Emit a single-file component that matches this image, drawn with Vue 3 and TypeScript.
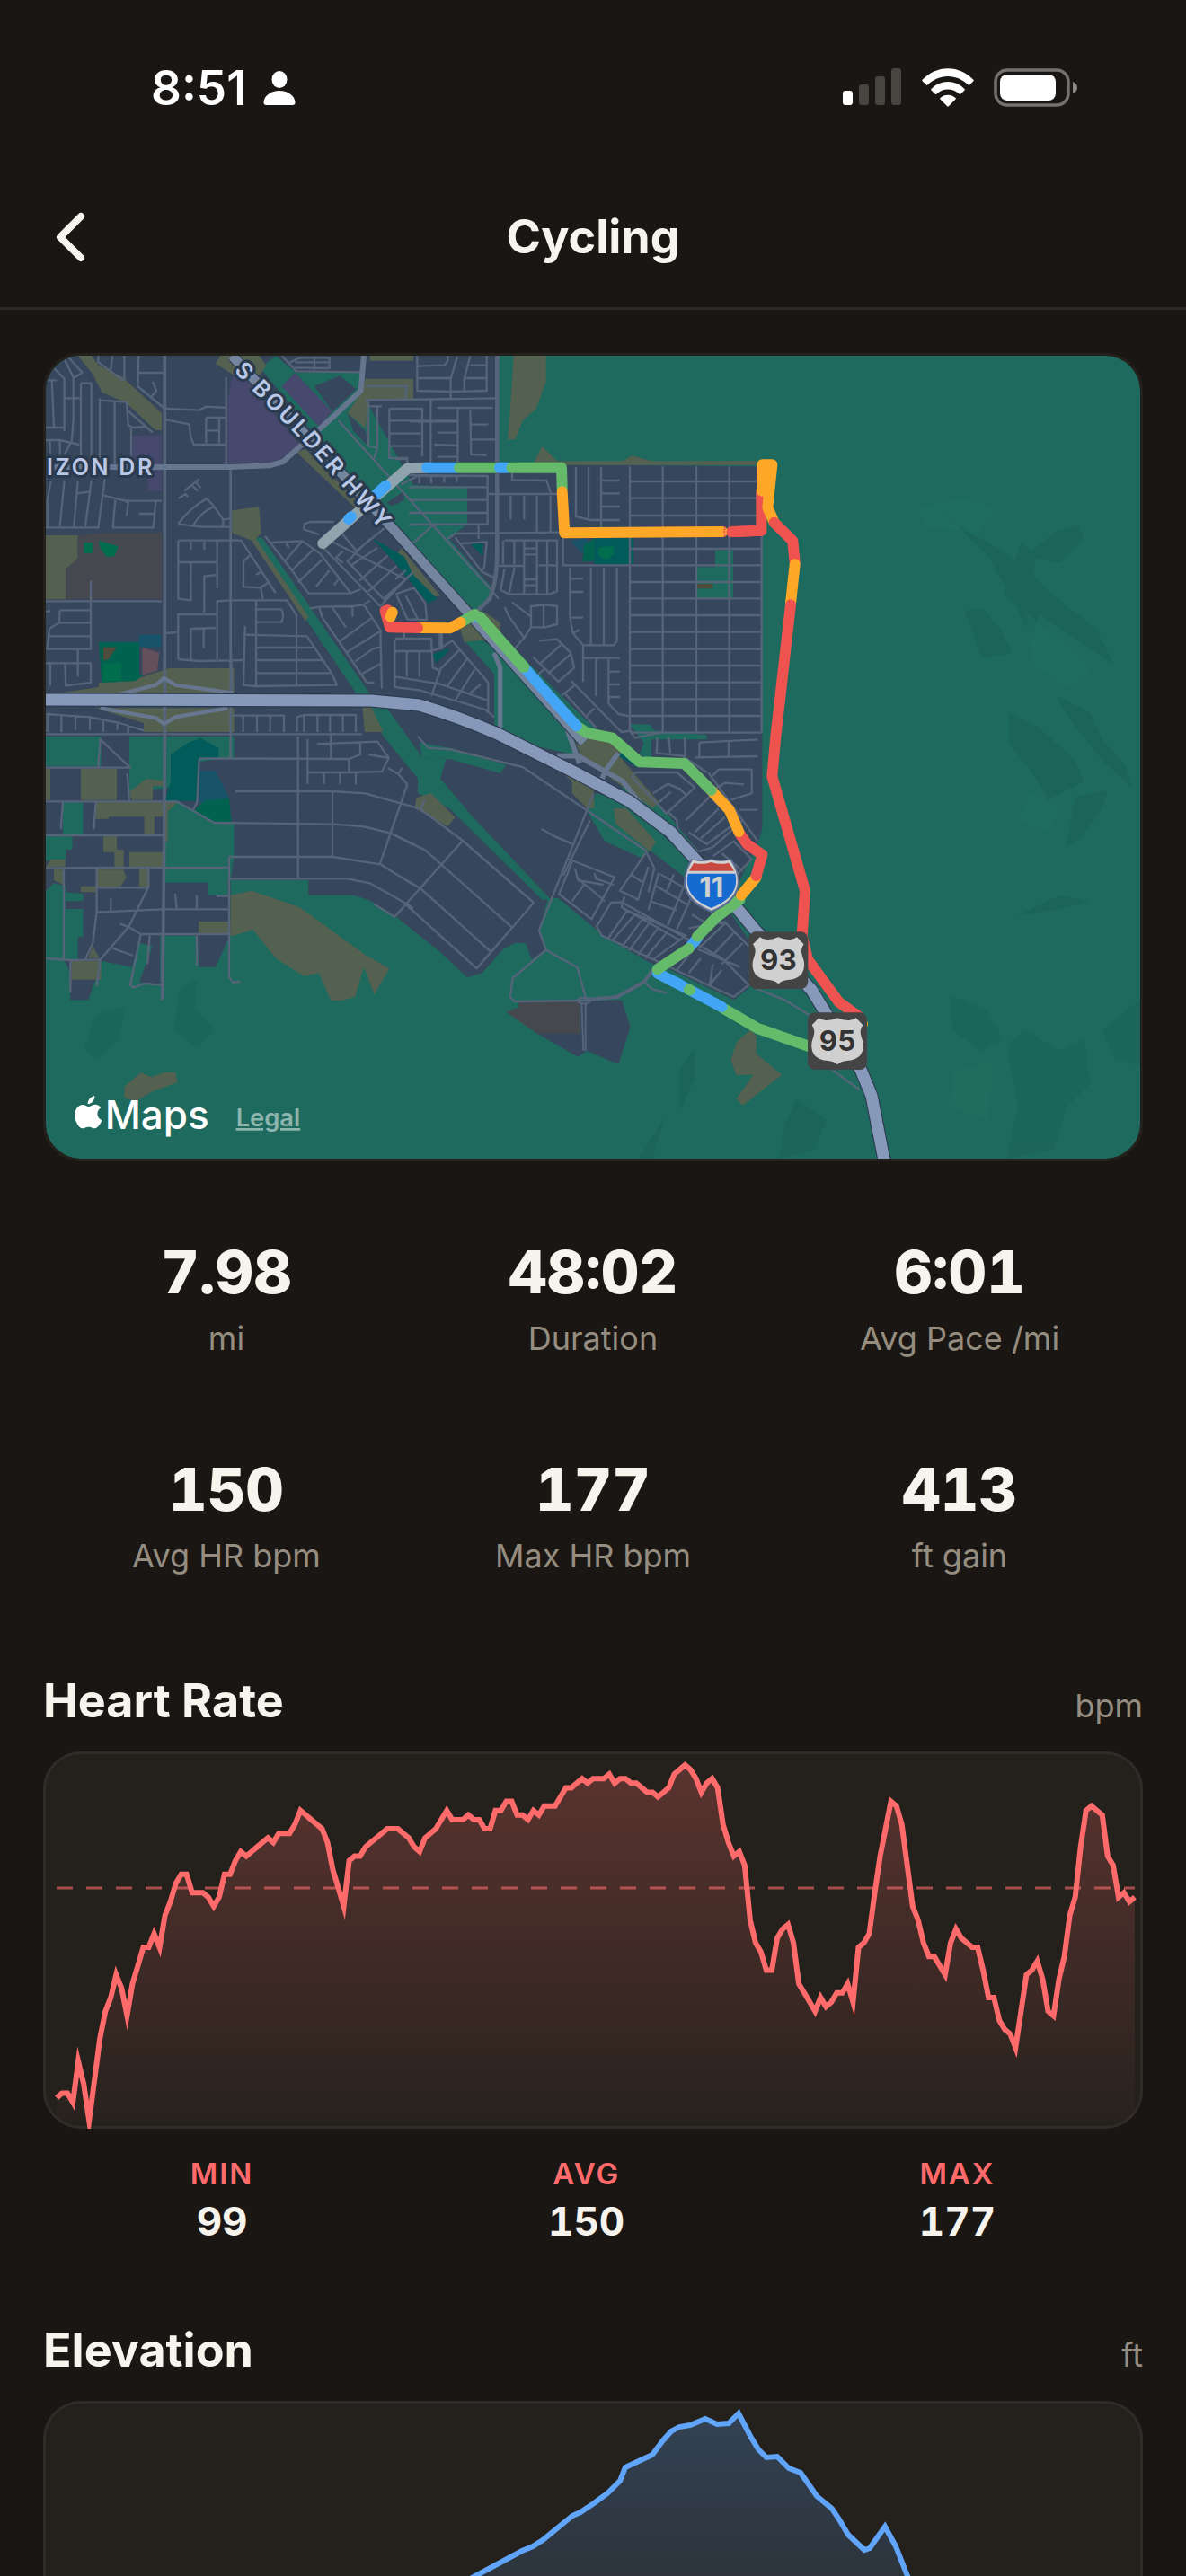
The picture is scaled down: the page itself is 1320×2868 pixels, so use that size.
<script setup lang="ts">
import { computed } from 'vue'

interface Stat {
  value: string
  label: string
}

interface Leg {
  zone: 'idle' | 'easy' | 'steady' | 'tempo' | 'hard'
  d: string
}

const stats: Stat[] = [
  { value: '7.98', label: 'mi' },
  { value: '48:02', label: 'Duration' },
  { value: '6:01', label: 'Avg Pace /mi' },
  { value: '150', label: 'Avg HR bpm' },
  { value: '177', label: 'Max HR bpm' },
  { value: '413', label: 'ft gain' },
]

const heartSummary: Stat[] = [
  { label: 'MIN', value: '99' },
  { label: 'AVG', value: '150' },
  { label: 'MAX', value: '177' },
]

// Heart rate samples, evenly spaced over the ride
const heartRate: number[] = [
  104, 105, 105, 103, 112, 107, 99, 108, 117, 123, 126, 131, 128, 122, 129, 133, 137, 137, 140, 137,
  144, 147, 151, 153, 153, 149, 149, 149, 148, 146, 148, 153, 153, 156, 158, 157, 158, 159, 160, 161,
  160, 162, 162, 162, 164, 167, 166, 165, 164, 163, 160, 154, 150, 146, 156, 157, 157, 159, 160, 161,
  162, 163, 163, 163, 162, 161, 159, 158, 161, 162, 163, 165, 167, 165, 165, 165, 166, 165, 165, 163,
  163, 167, 167, 169, 169, 166, 166, 165, 167, 166, 168, 168, 168, 170, 172, 172, 173, 174, 173, 174,
  174, 174, 175, 173, 174, 174, 173, 173, 172, 171, 171, 170, 171, 172, 175, 176, 177, 176, 174, 171,
  173, 174, 172, 164, 160, 157, 158, 155, 143, 138, 136, 132, 132, 139, 141, 142, 138, 129, 127, 125,
  123, 126, 124, 125, 127, 127, 129, 125, 137, 138, 140, 149, 157, 163, 169, 168, 164, 155, 146, 143,
  138, 135, 135, 133, 131, 138, 141, 139, 138, 137, 137, 132, 126, 126, 121, 119, 118, 115, 123, 131,
  132, 134, 130, 123, 122, 130, 135, 144, 148, 159, 167, 168, 167, 166, 157, 155, 148, 149, 147, 148,
]

// Elevation profile in chart units (x along the ride, y down from the top)
const elevation: [number, number][] = [
  [15, 405], [90, 372], [180, 340], [270, 300], [360, 262], [430, 222], [481, 195], [533, 167], [545, 162], [556, 155],
  [589, 128], [598, 124], [613, 114], [628, 103], [642, 89], [648, 74], [663, 67], [678, 60],
  [690, 44], [699, 34], [708, 29], [720, 27], [737, 20], [750, 26], [763, 25], [774, 14],
  [787, 39], [796, 54], [805, 63], [817, 62], [830, 75], [843, 80], [850, 90], [861, 106],
  [878, 120], [886, 132], [896, 149], [914, 166], [920, 164], [937, 140], [949, 162], [962, 195],
  [1010, 280], [1080, 350], [1215, 400],
]

const PLOT_LEFT = 15
const PLOT_WIDTH = 1200
const PLOT_TOP = 15
const PLOT_HEIGHT = 396
const BASE = PLOT_TOP + PLOT_HEIGHT

const heartY = (bpm: number): number => PLOT_TOP + ((177 - bpm) / (177 - 99)) * PLOT_HEIGHT

const heartLine = computed(() =>
  heartRate
    .map((v, i) => {
      const x = PLOT_LEFT + (i / (heartRate.length - 1)) * PLOT_WIDTH
      return `${x.toFixed(1)},${heartY(v).toFixed(1)}`
    })
    .join(' '),
)
const elevationLine = computed(() => elevation.map(([x, y]) => `${x},${y}`).join(' '))
const areaUnder = (line: string): string =>
  `${PLOT_LEFT},${BASE} ${line} ${PLOT_LEFT + PLOT_WIDTH},${BASE}`

const route: Leg[] = [
  { zone: 'tempo', d: 'M2740 2262L2760 2280' },
  { zone: 'idle', d: 'M958 675L1240 425Q1260 422 1300 422' },
  { zone: 'easy', d: 'M1044 594L1052 586M1138 510L1168 482' },
  { zone: 'easy', d: 'M1305 422L1405 422' },
  { zone: 'steady', d: 'M1413 422L1530 422' },
  { zone: 'easy', d: 'M1548 422L1575 422' },
  { zone: 'steady', d: 'M1588 422L1755 422L1757 490' },
  { zone: 'hard', d: 'M2325 636L2422 632L2422 500' },
  { zone: 'tempo', d: 'M1757 502L1765 640L2292 636' },
  { zone: 'hard', d: 'M2328 636L2422 632' },
  { zone: 'tempo', d: 'M2424 500L2425 412L2458 412L2443 555L2465 605M2440 420L2436 500' },
  { zone: 'hard', d: 'M2465 605L2527 667L2534 740' },
  { zone: 'tempo', d: 'M2534 745L2520 875' },
  { zone: 'hard', d: 'M2520 880L2470 1320L2458 1453L2568 1835L2558 1985L2577 2065L2680 2206L2750 2258' },
  { zone: 'steady', d: 'M2590 2358L2410 2295L2290 2225' },
  { zone: 'easy', d: 'M2290 2223L2075 2110' },
  { zone: 'steady', d: 'M2180 2165L2184 2167' },
  { zone: 'easy', d: 'M2150 2148L2120 2133' },
  { zone: 'easy', d: 'M2188 2018L2208 1994' },
  { zone: 'steady', d: 'M2075 2098L2180 2028M2208 1988L2270 1925L2350 1865' },
  { zone: 'tempo', d: 'M2355 1850L2405 1790' },
  { zone: 'hard', d: 'M2405 1785L2425 1715L2375 1680L2350 1645' },
  { zone: 'tempo', d: 'M2347 1638L2315 1565L2255 1500' },
  { zone: 'steady', d: 'M2255 1500L2165 1410L2015 1405L1925 1325L1840 1308L1805 1285' },
  { zone: 'easy', d: 'M1805 1285L1630 1090' },
  { zone: 'steady', d: 'M1626 1088L1490 930' },
  { zone: 'easy', d: 'M1474 920L1476 922' },
  { zone: 'steady', d: 'M1630 1088L1482 920M1465 912L1425 935' },
  { zone: 'tempo', d: 'M1418 939L1383 958L1285 957' },
  { zone: 'hard', d: 'M1275 957L1182 955L1166 900L1174 897' },
  { zone: 'tempo', d: 'M1184 920L1190 905' },
]

// Residential blocks east of the highway share one regular grid
const gridStreets = computed(() => {
  const cols = [1983, 2093, 2205, 2315, 2423].map((x) => `M${x} 418V1305`)
  const rows = [468, 524, 582, 638, 693, 748, 804, 859, 915, 971, 1028, 1083, 1139, 1195, 1251, 1307].map(
    (y) => `M1983 ${y}H2423`,
  )
  return cols.concat(rows).join('')
})

const shieldPath =
  'M37 18Q50 28 65 26Q82 26 99 18Q116 26 133 26Q148 28 161 18L184 42Q172 58 178 78Q194 118 176 142Q160 160 130 161Q112 162 99 174Q86 162 68 161Q38 160 22 142Q4 118 20 78Q26 58 14 42Z'
</script>

<template>
  <div class="app">
    <div class="status-bar">
      <div class="clock">
        <span>8:51</span>
        <svg class="person" viewBox="0 0 36 38" aria-hidden="true">
          <ellipse cx="18" cy="9.500" rx="8.500" ry="9.500" />
          <path d="M3.500 38C1 38 .3 36.500.5 34.500C1.200 27.500 8.500 22 18 22s16.800 5.500 17.500 12.500C35.700 36.500 35 38 32.500 38Z" />
        </svg>
      </div>
      <div class="indicators">
        <svg class="cellular" viewBox="0 0 66 42" aria-hidden="true">
          <rect x="0" y="25" width="11" height="16" rx="3" fill="#fff" />
          <rect x="18" y="18" width="11" height="23" rx="3" fill="#474540" />
          <rect x="36" y="9" width="11" height="32" rx="3" fill="#474540" />
          <rect x="54" y="0" width="11" height="41" rx="3" fill="#474540" />
        </svg>
        <svg class="wifi" viewBox="0 0 58 43" aria-hidden="true">
          <path d="M.6 12.800C8.500 4.800 18 .2 29 .2s20.500 4.600 28.400 12.600c.5.500.5 1 0 1.500l-4.200 4.300c-.5.500-1 .5-1.500 0C45.500 12.500 37.500 9 29 9S12.500 12.500 6.300 18.600c-.5.500-1 .5-1.500 0L.6 14.300c-.5-.5-.5-1 0-1.500Z" />
          <path d="M10.500 23C15.500 17.800 22 15 29 15s13.500 2.800 18.500 8c.5.500.5 1 0 1.500l-4.300 4.200c-.5.500-1 .5-1.500 0C38.200 25.400 33.800 23.600 29 23.600s-9.200 1.800-12.700 5.100c-.5.500-1 .5-1.500 0l-4.300-4.200c-.5-.5-.5-1 0-1.500Z" />
          <path d="M20.500 33.100C22.800 30.900 25.800 29.700 29 29.700s6.200 1.200 8.500 3.400c.5.500.5 1 0 1.500L29.800 42.300c-.6.600-1 .6-1.600 0L20.500 34.600c-.5-.5-.5-1 0-1.500Z" />
        </svg>
        <svg class="battery" viewBox="0 0 94 43" aria-hidden="true">
          <rect x="2" y="2" width="81" height="39" rx="13" fill="none" stroke="#73716e" stroke-width="3.500" />
          <rect x="7" y="7" width="62" height="29" rx="8" fill="#fff" />
          <path d="M88 15c3 1 5 3.500 5 6.500s-2 5.500-5 6.500Z" fill="#8a8886" />
        </svg>
      </div>
    </div>

    <header class="nav">
      <button class="back" type="button" aria-label="Back">
        <svg viewBox="0 0 36 56" aria-hidden="true">
          <path d="M30 5L7 28L30 51" />
        </svg>
      </button>
      <h1>Cycling</h1>
    </header>

    <main class="content">
      <section class="map-card" aria-label="Route map">
        <svg class="map" viewBox="33 48 3654 2682" role="img" aria-label="Cycling route near Boulder Highway">
          <rect x="33" y="48" width="3654" height="2682" fill="#1e6a5e" />

          <!-- hillshade -->
          <g fill="#1b6056" opacity="0.500">
            <path d="M3000 540L3120 640L3230 700L3330 780L3400 860L3350 900L3330 1000L3270 880L3180 720Z" />
            <path d="M3230 850L3290 670L3340 720L3330 790L3460 900L3540 960L3600 1080L3540 1040L3420 960L3330 900Z" />
            <path d="M3300 720L3400 640L3480 610L3500 660L3420 740Z" />
            <path d="M3100 900L3160 890L3220 960L3260 1040L3160 1060Z" />
            <path d="M3250 1240L3350 1290L3470 1400L3500 1470L3380 1530L3330 1450L3250 1340Z" />
            <path d="M3400 1180L3520 1240L3560 1330L3640 1420L3660 1490L3560 1400L3480 1300Z" />
            <path d="M3470 1520L3580 1500L3560 1560L3490 1660L3440 1690Z" />
            <path d="M3270 1920L3420 1850L3520 1870L3400 1900Z" />
            <path d="M3050 2180L3180 2240L3230 2330L3150 2370L3060 2300Z" />
            <path d="M3240 2350L3300 2300L3420 2370L3500 2330L3520 2480L3440 2560L3400 2700L3240 2730L3280 2560Z" />
            <path d="M3560 2300L3687 2200L3687 2420L3600 2400Z" />
            <path d="M2150 2430L2200 2360L2200 2460L2150 2570Z" />
            <path d="M2100 2590L2060 2730L2010 2730L2070 2640Z" />
            <path d="M480 2160L540 2130L530 2230L600 2300L540 2360L460 2300Z" />
            <path d="M200 2250L300 2220L280 2330L200 2400L160 2360Z" />
            <path d="M2540 2530L2640 2600L2600 2700L2480 2730L2500 2620Z" />
          </g>
          <g fill="#216f62" opacity="0.500">
            <path d="M2940 560L3100 520L3200 560L3140 640L2980 620Z" />
            <path d="M3300 900L3420 1000L3520 1100L3450 1160L3330 1080Z" />
            <path d="M3060 2440L3200 2400L3180 2600L3050 2560Z" />
            <path d="M3320 1500L3420 1560L3380 1640L3280 1600Z" />
          </g>

          <!-- built-up land -->
          <g fill="#36465c">
            <path d="M33 48H1545V410L2425 418V1630L2412 1670L2350 1800L2280 1800L2380 1990V2160L2330 2200L2290 2180L2120 2100L2050 2075L1900 1990L1745 1860H1710L1680 1970L1700 2035L1655 2065L1635 2010H1600L1560 2030L1490 2110L1440 2125L1350 2040L1200 1920L1110 1865L1060 1850H910V1800H650V1980L600 2090H545L540 1985H415V2150L345 2140L390 2020L345 2010L320 2090L220 2070L175 2200H115V2110L70 2020L33 1840Z" />
            <path d="M1675 2313H1817V2205L1955 2200L1985 2290L1945 2415L1840 2370L1810 2390Z" />
          </g>

          <!-- open ground -->
          <g fill="#1e6a5e">
            <path d="M800 48L870 105H1085L1075 150L1260 480L1440 486V610L1380 660L1520 820L1510 860L1465 900L1200 640L750 90Z" />
            <path d="M720 660L755 655L1120 1185H1075L910 940Z" />
            <path d="M1110 1222H1170L1290 1390L1370 1395L1350 1460L1460 1590L1720 1865H1690L1380 1560L1275 1510V1460L1160 1320Z" />
            <path d="M1280 1340L1390 1360L1570 1415L1550 1442L1380 1395L1290 1390Z" />
            <path d="M1430 1000L1470 980L1560 1050L1780 1290L1815 1385L1660 1350L1530 1290V1110Z" />
            <path d="M1600 1030L1760 1190L1880 1305L1860 1320L1640 1110Z" />
            <path d="M1980 1278L2050 1280L2065 1300L2240 1315V1330L2055 1330V1400L2015 1380L2030 1340Z" />
            <path d="M1840 1570L1900 1670L2020 1725L2050 1700L2180 1800L2250 1800L1980 1540L1870 1510Z" />
            <path d="M1930 1400L2060 1520L2210 1700L2190 1720L1960 1500Z" />
            <path d="M2300 1880L2380 2000V1970L2330 1860Z" />
            <path d="M2268 698H2328V857H2208V754H2268Z" />
            <path d="M33 1320H218V1420H33ZM312 1320H450V1490L312 1505ZM430 1320H662V1392H640L430 1420Z" />
            <path d="M430 1535H470L595 1610H662V1720L650 1800H640V1850H576V1808H428V1640Z" />
            <path d="M90 1540H158V1646H90ZM33 1650H122V1698H100V1735H33ZM33 1835L60 1810L100 1820V1840L158 1846V1870H100V1896H158V1990H140V2066H90L33 2060Z" />
          </g>

          <g fill="#546150">
            <path d="M140 48H185L210 80L290 120L420 240V297H400L300 205L220 170L190 110Z" />
            <path d="M615 48H745L770 80L750 110L680 125L600 75Z" />
            <path d="M870 370L900 360L1100 560L1080 570Z" />
            <path d="M1115 48H1260V65H1115ZM1100 125H1260V195H1110L1100 290L1040 240L1080 180Z" />
            <path d="M655 565L745 553L752 640L735 660L910 920L900 935L720 665L655 640Z" />
            <path d="M33 648H140V725L100 760V862H33Z" />
            <path d="M445 1092H662V1175H73L210 1155V1140L360 1120Z" />
            <path d="M200 1225H662V1305H360V1275ZM1090 1222H1120L1160 1305H1098Z" />
            <path d="M1595 48H1703V135L1670 225L1625 265L1600 328H1575L1585 205Z" />
            <path d="M1665 400L1690 350L1740 400H1960L1990 382L2055 400H2405V413H1665Z" />
            <path d="M1410 940L1500 905L1550 940V970L1540 990L1430 1005Z" />
            <path d="M1220 690L1350 850L1310 855L1200 720Z" />
            <path d="M1795 1320L1940 1340L1960 1400L2080 1540L2060 1560L1880 1430L1820 1390Z" />
            <path d="M1650 1345L1860 1480L1865 1560L1840 1560L1790 1510V1470Z" />
            <path d="M1930 1560H1970L2070 1670L2050 1705L1935 1610Z" />
            <path d="M1270 1525L1320 1510L1400 1590L1375 1620L1265 1560Z" />
            <path d="M150 1428H270V1532H150ZM33 1428H48V1532H33ZM312 1505L370 1460L425 1468V1485H390V1532H320Z" />
            <path d="M200 1538H475L440 1570V1672H430V1588H395V1645H362V1588H243V1595H200ZM225 1652H270V1698H293V1755H262V1706H225ZM312 1706H430V1755H312ZM48 1730H98V1755H33L48 1735Z" />
            <path d="M200 1765H292L302 1790L280 1825H200V1840H150V1820H200ZM345 1762H380V1822H345ZM60 1765H90V1815L60 1800Z" />
            <path d="M543 1938H650V1978H543ZM118 2070H218V2132H118ZM175 2060L190 2020L212 2060Z" />
            <path d="M650 1850L720 1835L880 1890L1100 2050L1180 2095L1130 2182L1095 2090L1065 2190L1020 2202H985L945 2110L895 2120L800 2060L725 1965L650 1988Z" />
            <path d="M295 2490L350 2442L385 2458L430 2442H465L473 2475L390 2505L330 2540L295 2525Z" />
            <path d="M2385 2300L2405 2320V2380L2490 2450L2360 2552L2338 2530L2395 2450H2338L2320 2400L2340 2340Z" />
          </g>

          <!-- campuses, parks and commercial land -->
          <path d="M655 120L700 125L880 345L800 405H640V200ZM322 315H420V500H375V460L322 400ZM820 150L865 105L990 235L945 285Z" fill="#46486e" />
          <path d="M930 150L1015 115L1070 160L990 235ZM1040 240L1100 300L1110 350L1060 300ZM1170 540L1230 500V530L1190 550Z" fill="#36465c" />
          <path d="M140 648L220 640H420V862H100V760L140 725Z" fill="#45484f" />
          <path d="M1570 2240L1610 2225V2205H1817V2313H1675Z" fill="#45484f" />
          <path d="M450 1380L510 1340L550 1325L610 1360V1390L545 1395L535 1535H430L450 1470ZM1120 655L1230 720L1260 780L1340 860L1310 875L1200 740ZM1450 675H1492V718ZM1325 1045L1380 1025L1370 1045L1335 1075ZM1945 1385L1960 1370L2010 1410V1425ZM1865 658H1995V744H1865Z" fill="#005b5a" />
          <path d="M545 1435H600L645 1525L545 1540ZM345 980H418V1022H345ZM1785 665L1840 658V700L1820 705Z" fill="#17546a" />
          <path d="M210 1005H345V1115H360L330 1135L220 1140ZM525 1570L560 1535L645 1525L653 1605H595ZM1830 680L1865 658V735H1825Z" fill="#00624f" />
          <path d="M160 672H190V707H160ZM210 665L275 685L262 718L235 720L215 690ZM225 1075H285V1135H225ZM1880 690L1930 682V710L1905 730L1878 715Z" fill="#006e4c" />
          <path d="M225 1022H270L240 1064H225ZM2208 810H2260V826H2208Z" fill="#504c3c" />
          <path d="M355 1022L412 1040L405 1100L355 1115Z" fill="#63505a" />

          <!-- residential streets -->
          <g class="streets">
            <path :d="gridStreets" />
            <path d="M60 90L95 125V300M95 60L125 120V260L120 330L95 380M110 55L155 105L125 122M33 130H70M53 130L60 285M33 288H95M95 190H150M150 140H185V410M150 140V410M33 330H80L145 345M47 330V410M80 330V410M213 190V410M213 197L303 203L308 280L325 288L370 285M305 230L390 305M263 200V410M318 290V410" />
            <path d="M208 48V70L292 130M255 48L250 95M295 48V130M343 48L340 150L430 225M343 105H425M390 135L402 165L385 185M435 225L545 230L570 218L635 222M435 262L512 277L517 320L527 345H635M568 255H635M568 255V340M568 298H612M612 255V340M635 120V410" />
            <path d="M50 465L38 530V620M33 622H208L230 460M95 465L80 618M140 465L127 618M185 465L165 618M137 508L180 502M225 515L300 533H420M300 533L308 540L303 583M265 530L257 622H392L400 535M345 576H397" />
            <path d="M475 525L500 510L507 520M495 500L545 460M520 480L540 500M530 465L550 490M475 610Q510 560 570 525Q600 555 625 595L650 592M475 610L550 620H650M525 615Q550 570 595 552M625 595V618" />
            <path d="M475 665H685L800 840M475 665V860L517 865V738M475 738H605M605 665V825M517 670V695M562 670V695M562 905V785L605 780M715 715L693 735V820L750 823L758 860M750 823L780 803M735 780L755 768M475 1062V912H605V1062M475 1062L545 1068L690 1065M605 1062V868L650 865H838L870 915V1148M517 1062V960L600 957M560 957V1025M650 1000L655 1160M735 868V1150M735 895H820Q830 915 820 938H735M698 950L693 1148L735 1152L1005 1148L985 1105L905 985L693 980M735 1023H925M735 1065H960M735 1108H985" />
            <path d="M33 868H420M183 800V1028H33M33 902H48M80 898H183M80 898L77 940H183M77 940L45 960L38 1025M38 985H180M33 1075H183V1140L100 1150L97 1075M48 1075V1150M140 1030V1120M430 975L470 972" />
            <path d="M765 650L855 765L910 842H1050L1085 828M785 672L890 667L950 710L1050 840M830 735L890 667M855 765L930 692M875 805L955 730M935 820L980 765M995 815L1010 795M835 675L845 690M895 610L915 603H995M895 610V628L945 645M960 690L1150 885L1215 815M1020 640L1070 700L1175 615M990 670L1235 795M1115 660L1040 735L1160 860M1140 690L1050 750M1175 715L1080 800M1205 750L1110 835M1235 795L1160 860M1005 720L1025 700M1160 870L1260 770M1010 265L1520 830L1545 860" />
            <path d="M915 892L945 887L1055 885L1095 880L1115 865M945 887L955 920L1105 1140H1130M990 890L1035 955M1057 885V920M1095 880L1150 965L1155 1160M1120 925L1010 1005M1155 965L1035 1040M1155 1020L1125 1027L1065 1070M1155 1075L1090 1110M1000 720L1025 740" />
            <path d="M33 1245L180 1255L280 1275L360 1300M38 1245V1305M85 1250V1305M132 1250V1298M180 1255V1298M225 1260V1305M272 1270V1298M308 1280V1310M650 1250V1305M650 1250H828V1305M692 1250V1305M738 1250V1305M782 1250V1305M872 1305V1255L895 1248H1068V1305M895 1250V1305M940 1250V1305M982 1250V1305M1025 1250V1305M33 1312H1090M907 1328V1478M985 1312V1395M938 1345L1140 1337L1178 1392L1155 1437L1045 1440H905M1083 1340V1380L1045 1395V1440M1110 1380L1178 1392M962 1440V1478M1015 1440V1478M1068 1440V1480" />
            <path d="M820 48L870 100L1090 103M840 75L880 55H980V90L865 88M930 50V95M865 70H980M1100 150H1240L1232 195H1100M1110 200V350L1140 355L1130 390M1140 215V350M1110 217H1155M1180 225H1290V385M1180 225V390H1240V410M1180 265H1405M1180 308H1285M1180 350H1285M1200 393H1240" />
            <path d="M1273 48V165L1385 168L1505 165V48M1273 83L1365 80L1375 65V48M1273 123H1385M1385 190V125L1407 50M1430 165V125L1450 50M1430 123H1505M1450 80H1505M1100 197L1540 190M1318 197V405M1250 268L1405 267M1408 225V405M1340 222H1525M1340 305H1405M1330 345L1405 348M1340 386H1405M1450 227L1453 378L1505 380M1453 278H1510M1453 328H1535" />
            <path d="M1218 478L1275 450H1405V470M1280 450V475M1320 450V475M1363 450V472M1245 447L1508 450V610L1245 612M1245 487H1508M1245 530H1508M1245 573H1508M1510 510H1740M1590 440V463L1705 465L1720 510M1585 515V595M1630 515V595M1673 515V635M1718 515V635M1803 420V585L1850 597H1950M1845 420V590M1887 420V630M1887 465H1950M1887 508H1950M1887 552H1950M1375 660L1400 642L1755 638M1478 615V660M1258 675L1325 615M1400 655L1490 770L1530 790M1420 675L1505 670L1497 755L1485 770" />
            <path d="M1565 665H1740V835L1715 845H1580L1552 830L1565 760M1597 665V745M1630 665V845M1673 665V845M1707 665V845M1630 692H1673M1630 712H1673M1630 795H1673M1630 815H1673M1540 750H1630M1678 748H1740M1598 755L1580 840M1560 665V745M1760 655V748H1983M1783 755V920L1793 975L1827 1015H1930L1940 1000V755M1783 793H1827M1783 837H1827M1783 923H1827M1793 975L1815 963M1853 755V1012M1896 755V1012M1827 1015V1138M1827 1058H1950M1870 1060V1185M1912 1062V1210L1945 1245L1983 1252V1300L2000 1325L2093 1305M1912 1103H1950M1912 1146H1950M1912 1188H1950" />
            <path d="M1565 888L1580 920L1630 990L1653 955V885L1700 880L1740 885V945L1700 955H1653M1695 882V953M1590 872L1653 920M1630 990L1600 1025M1680 1000L1740 995L1785 1040L1797 1090L1745 1137L1660 1055M1757 1010L1685 1075M1785 1045L1710 1110M1675 1115L1697 1095M1788 1135L1955 1305L1990 1300M1755 1183L1797 1150M1765 1175L1870 1290M1840 1250L1865 1225" />
            <path d="M1200 795L1235 765M1200 845L1262 823L1300 875L1305 930L1240 928L1205 850M1235 850L1275 928M1200 993H1320L1325 1090L1350 1100L1320 1185M1230 970V990M1195 1035H1320M1238 1035V1120M1280 1035V1120M1198 1120L1350 1145L1510 1200M1198 995V1155L1280 1165L1400 1200L1500 1230L1530 1255M1325 1033L1350 1025L1390 1000L1510 1140V1240M1415 1030L1350 1095M1440 1060L1375 1150M1465 1095L1400 1200M1485 1145L1450 1175" />
            <path d="M33 1424H315L215 1330L208 1420M33 1537H470L595 1608L990 1613L1090 1620L1185 1643L1260 1682M305 1443L312 1535M90 1540L83 1630M200 1540L193 1630M33 1650H428M33 1760L200 1758H645M93 1762V2065M203 1758V1905L190 2010L165 2065M33 2061L115 2067L215 2065L310 1955L375 1825V1760M203 1825H375M203 1907L420 1897H645M250 1860V1905M465 1845L470 1895M537 1850V1895M603 1853H645M280 1945L312 1957L350 1980H645M255 2027L325 2052M350 1980L315 2150L325 2158L365 2145L420 2150M380 1985L372 2080M115 2070V2175M215 2065L203 2155M537 1985V2085M645 1720V2125L658 2142L682 2137" />
            <path d="M545 1395L538 1540L525 1565M545 1393L1045 1395M665 1503H990L1100 1510L1260 1555M645 1722H990L1150 1747L1260 1815M645 1795H1040L1115 1810L1240 1880L1260 1895M875 1320V1795M990 1503V1722M1240 1480L1148 1747M1175 1425L1210 1445L1240 1480M1210 1445L1222 1425M1130 1880L1198 1922L1425 1668L1662 1875L1472 2095L1236 1882M1260 1555L1285 1563L1425 1668M1200 1650L1300 1700L1590 1958M1200 1778L1285 1828L1518 2038M1285 1562L1298 1532" />
            <path d="M1275 1320L1310 1358L1385 1363L1625 1422L1840 1567L2035 1700L2065 1760L2045 1840M1862 1510L1680 1967L1703 2033L1592 2127L1583 2190L1598 2205L1830 2202M1703 2033L1808 2092L1835 2190M1687 1628L1735 1655L1790 1678M1775 1728L1932 1790L1855 1930L1745 1845M1760 1785L1850 1600M1800 1760L1810 1800L1895 1815M1790 1740L1745 1850M1865 1775L1870 1795L1930 1815M1805 1790L1900 1870M1830 1815L1790 1870" />
            <path d="M2035 1710L1950 1835L2010 1865L2045 1755M1985 1780L2030 1810M1920 1875L1955 1873L2290 2060L2380 2150L2330 2190L1890 1985L1872 1955ZM1960 1895L2170 1985L2060 2065M1975 1900L1910 1995M2000 1915L1925 2000M2025 1930L1955 2025M2050 1940L1980 2035M2080 1955L2010 2050M2110 1970L2035 2060M1965 1855L1955 1890L2150 2000M2080 1775L2045 1900M2085 1780L2200 1845M2065 1815L2180 1885M2050 1870L2140 1900M2130 1780L2105 1840M2170 1805L2110 1950M2200 1830L2140 1965M2190 1915L2250 1950M2180 1960L2300 1940L2380 2020M2300 1945L2210 2030M2330 1975L2260 2050M2360 2010L2290 2080M2210 2030L2350 2090M2180 2050L2140 2100M2220 2060L2180 2110M2260 2080L2250 2150M2290 2100L2250 2150M2030 2140L2060 2165L2110 2177" />
            <path d="M2000 1440H2140L2200 1490M2000 1440L1990 1455L2105 1577L2200 1490M2060 1510L2110 1478L2150 1495L2175 1520M2110 1570L2140 1600L2145 1640L2210 1705L2260 1690L2360 1600M2080 1540L2120 1505M2180 1640L2240 1680L2320 1620M2170 1600L2250 1520L2310 1580M2200 1640L2280 1560M2220 1660L2300 1590M2255 1455L2280 1430H2390V1510L2320 1532M2260 1500L2300 1475L2365 1480M2245 1440L2410 1670M2350 1565H2410M2260 1720L2330 1670L2390 1730L2340 1780M2290 1710L2360 1770M2075 1322L2072 1375L2160 1385L2240 1440M2113 1322L2118 1375M2166 1322L2168 1385M2215 1340L2410 1330M2215 1340V1390M2313 1335V1385M2200 1390L2410 1386" />
            <path d="M2400 2160L2500 2200L2590 2255M2660 2434L2750 2500" />
          </g>

          <!-- arterials -->
          <g fill="none" stroke="#56647a" stroke-width="14" stroke-linejoin="round">
            <path d="M430 48V1320L428 1700L422 2200" stroke-width="11" />
            <path d="M650 430V1000V1390" stroke-width="8" />
            <path d="M1540 48V700Q1540 800 1515 860L1470 905M1352 975V1030" />
            <path d="M1830 2200L1940 2190L2030 2140L2060 2100" stroke-width="12" />
            <path d="M1822 2210L1828 2370M1835 2210V2370" stroke-width="6" />
            <ellipse cx="1830" cy="2202" rx="20" ry="10" stroke-width="7" />
          </g>
          <g fill="none" stroke="#67768f" stroke-linejoin="round">
            <path d="M33 420H650L780 415L825 402L1000 245L1085 165L1095 48" stroke-width="18" />
            <path d="M265 1182L400 1148L428 1125L465 1148L660 1175M215 1225L400 1258L428 1278L465 1255L640 1225" stroke-width="13" />
            <path d="M1530 1040L1550 1090V1290" stroke-width="16" />
            <path d="M1775 1300L1815 1410M1740 1385H1810L1960 1470L2030 1560M1945 1375L1905 1430L1890 1460" stroke-width="17" />
          </g>
          <path d="M655 48L1200 635L1830 1340" fill="none" stroke="#2b3b4f" stroke-width="38" />
          <path d="M655 48L1200 635L1830 1340" fill="none" stroke="#73859f" stroke-width="32" />
          <path class="freeway-case" d="M33 1197L1120 1200L1280 1215Q1400 1250 1540 1310L1800 1440L1980 1535L2120 1640L2260 1795L2400 1965L2590 2167L2755 2435L2790 2520L2833 2740" />
          <path class="freeway" d="M33 1197L1120 1200L1280 1215Q1400 1250 1540 1310L1800 1440L1980 1535L2120 1640L2260 1795L2400 1965L2590 2167L2755 2435L2790 2520L2833 2740" />

          <path v-for="(leg, i) in route" :key="i" :d="leg.d" class="route" :class="leg.zone" />
          <path d="M2303 620Q2293 636 2303 652M2313 620Q2303 636 2313 652" fill="none" stroke="#ef5350" stroke-width="4" />

          <!-- highway shields -->
          <g transform="translate(2163 1724)">
            <path d="M24 5Q60 14 92 4Q124 14 160 5Q186 45 186 85Q180 150 92 184Q4 150 0 85Q0 45 24 5Z" fill="#5c6c92" />
            <path d="M30 8Q60 18 92 8Q124 18 154 8Q180 45 180 82Q176 144 92 177Q10 144 6 82Q6 45 30 8Z" fill="#d0d0d0" />
            <path d="M34 18Q62 26 92 16Q122 26 150 18Q162 32 168 45H18Q24 32 34 18Z" fill="#ca4a42" />
            <path d="M14 54H172Q176 70 174 86Q170 138 92 169Q16 138 12 86Q10 70 14 54Z" fill="#176ad0" />
            <text x="92" y="134" class="shield-text interstate">11</text>
          </g>
          <g transform="translate(2380 1972)">
            <rect width="198" height="191" rx="24" fill="#444" />
            <path :d="shieldPath" fill="#d0d0d0" />
            <text x="99" y="128" class="shield-text">93</text>
          </g>
          <g transform="translate(2577 2242)">
            <rect width="198" height="191" rx="24" fill="#444" />
            <path :d="shieldPath" fill="#d0d0d0" />
            <text x="99" y="128" class="shield-text">95</text>
          </g>

          <!-- road names -->
          <text x="36" y="446" class="road-name">IZON DR</text>
          <path id="boulder-hwy" d="M660 100L905 350L1270 765" fill="none" />
          <text class="road-name"><textPath href="#boulder-hwy">S BOULDER HWY</textPath></text>

          <!-- attribution -->
          <g transform="translate(130 2520)" fill="#fff">
            <path d="M66 0C67 13 57 27 43 28C42 15 53 2 66 0ZM45 36C52 36 58 29 68 29C75 29 83 33 87 40C70 50 72 74 90 82C85 95 76 109 66 109C58 109 56 104 46 104C36 104 33 109 26 109C13 109 0 86 0 64C0 42 13 30 27 30C35 30 40 36 45 36Z" />
          </g>
          <text x="230" y="2632" class="maps-name">Maps</text>
          <a href="#legal"><text x="668" y="2622" class="legal">Legal</text></a>
        </svg>
      </section>

      <dl class="stats">
        <div v-for="s in stats" :key="s.label" class="stat">
          <dt>{{ s.label }}</dt>
          <dd>{{ s.value }}</dd>
        </div>
      </dl>

      <section class="chart-section heart">
        <div class="section-head">
          <h2>Heart Rate</h2>
          <span class="unit">bpm</span>
        </div>
        <div class="chart-card">
          <svg viewBox="0 0 1224 420" role="img" aria-label="Heart rate over time">
            <defs>
              <linearGradient id="heart-fill" x1="0" y1="0" x2="0" y2="1">
                <stop offset="0" stop-color="#ff6b6b" stop-opacity="0.250" />
                <stop offset="1" stop-color="#ff6b6b" stop-opacity="0.020" />
              </linearGradient>
            </defs>
            <polygon :points="areaUnder(heartLine)" fill="url(#heart-fill)" />
            <path :d="`M15 ${heartY(150).toFixed(0)}H1215`" class="average" />
            <polyline :points="heartLine" class="line heart-line" />
          </svg>
        </div>
        <dl class="summary">
          <div v-for="s in heartSummary" :key="s.label">
            <dt>{{ s.label }}</dt>
            <dd>{{ s.value }}</dd>
          </div>
        </dl>
      </section>

      <section class="chart-section">
        <div class="section-head">
          <h2>Elevation</h2>
          <span class="unit">ft</span>
        </div>
        <div class="chart-card">
          <svg viewBox="0 0 1224 420" role="img" aria-label="Elevation over time">
            <defs>
              <linearGradient id="elevation-fill" x1="0" y1="0" x2="0" y2="1">
                <stop offset="0" stop-color="#60a5fa" stop-opacity="0.250" />
                <stop offset="1" stop-color="#60a5fa" stop-opacity="0.020" />
              </linearGradient>
            </defs>
            <polygon :points="areaUnder(elevationLine)" fill="url(#elevation-fill)" />
            <polyline :points="elevationLine" class="line elevation-line" />
          </svg>
        </div>
      </section>
    </main>
  </div>
</template>

<style>
body {
  margin: 0;
  background: #1a1613;
}
</style>

<style scoped>
.app {
  display: flex;
  flex-direction: column;
  height: 100vh;
  overflow: hidden;
  background: #1a1613;
  color: #f7f3ed;
  font-family: Inter, "Liberation Sans", sans-serif;
}

h1,
h2,
dl,
dd {
  margin: 0;
}

svg {
  display: block;
}

.status-bar {
  flex: none;
  display: flex;
  justify-content: space-between;
  align-items: flex-start;
  height: 118px;
  padding: 68px 120px 0 168px;
}

.clock {
  display: flex;
  align-items: center;
  gap: 18px;
  height: 60px;
  color: #fff;
  font-size: 53px;
  font-weight: 600;
  line-height: 60px;
}

.person {
  width: 36px;
  height: 38px;
  fill: #fff;
}

.indicators {
  display: flex;
  align-items: center;
  gap: 22px;
  height: 58px;
}

.cellular {
  width: 66px;
  height: 42px;
}

.wifi {
  width: 58px;
  height: 43px;
  fill: #fff;
}

.battery {
  width: 94px;
  height: 43px;
}

.nav {
  flex: none;
  display: grid;
  grid-template-columns: 1fr auto 1fr;
  align-items: center;
  height: 156px;
  padding: 0 48px;
  border-bottom: 3px solid #2e2a27;
}

.back {
  justify-self: start;
  padding: 12px;
  border: 0;
  background: none;
}

.back svg {
  width: 36px;
  height: 56px;
  fill: none;
  stroke: #f7f3ed;
  stroke-width: 8;
  stroke-linecap: round;
  stroke-linejoin: round;
}

h1,
h2 {
  font-size: 52px;
  font-weight: 700;
  line-height: 64px;
}

.content {
  flex: 1;
  min-height: 0;
  padding: 48px 48px 0;
  overflow-y: auto;
  scrollbar-width: none;
}

.map-card {
  overflow: hidden;
  border: 3px solid #24211c;
  border-radius: 42px;
}

.map {
  width: 100%;
  height: auto;
}

.streets path {
  fill: none;
  stroke: #56647a;
  stroke-width: 7;
  stroke-linejoin: round;
}

.freeway-case {
  fill: none;
  stroke: #2b3b4f;
  stroke-width: 46;
}

.freeway {
  fill: none;
  stroke: #8799bb;
  stroke-width: 39;
}

.route {
  fill: none;
  stroke-width: 36;
  stroke-linecap: round;
  stroke-linejoin: round;
}

.idle {
  stroke: #90a4ae;
}

.easy {
  stroke: #42a5f5;
}

.steady {
  stroke: #66bb6a;
}

.tempo {
  stroke: #ffa726;
}

.hard {
  stroke: #ef5350;
}

.shield-text {
  fill: #333;
  font-size: 94px;
  font-weight: 700;
  text-anchor: middle;
}

.interstate {
  fill: #d0d0d0;
}

.road-name {
  fill: #b9c8e6;
  stroke: #2b3b4f;
  stroke-width: 20;
  stroke-linejoin: round;
  paint-order: stroke;
  font-size: 75px;
  font-weight: 600;
  letter-spacing: 8px;
}

.maps-name {
  fill: #fff;
  font-size: 132px;
  font-weight: 500;
}

.legal {
  fill: #8db4ad;
  font-size: 82px;
  font-weight: 600;
  text-decoration: underline;
  text-underline-offset: 10px;
}

.stats {
  display: grid;
  grid-template-columns: repeat(3, 1fr);
  row-gap: 110px;
  margin-top: 87px;
}

.stat {
  display: flex;
  flex-direction: column-reverse;
  gap: 16px;
  text-align: center;
}

.stat dt,
.unit {
  color: #958d80;
  font-size: 36px;
  line-height: 44px;
}

.stat dd {
  font-size: 66px;
  font-weight: 800;
  font-variant-numeric: tabular-nums;
  line-height: 72px;
}

.chart-section {
  margin-top: 85px;
}

.chart-section.heart {
  margin-top: 108px;
}

.section-head {
  display: flex;
  justify-content: space-between;
  align-items: baseline;
  margin-bottom: 24px;
}

.chart-card {
  overflow: hidden;
  border-radius: 42px;
  background: #24211c;
  box-shadow: inset 0 0 0 3px #2e2b28;
}

.chart-card svg {
  width: 100%;
  height: auto;
}

.line {
  fill: none;
  stroke-width: 6;
  stroke-miterlimit: 10;
}

.heart-line {
  stroke: #ff6b6b;
}

.elevation-line {
  stroke: #60a5fa;
}

.average {
  fill: none;
  stroke: #ff6b6b;
  stroke-opacity: 0.6;
  stroke-width: 3;
  stroke-dasharray: 18 15;
}

.summary {
  display: flex;
  justify-content: space-around;
  margin-top: 30px;
  text-align: center;
}

.summary dt {
  color: #ff6b6b;
  font-size: 33px;
  font-weight: 600;
  line-height: 40px;
  letter-spacing: 2px;
}

.summary dd {
  margin-top: 6px;
  font-size: 44px;
  font-weight: 700;
  font-variant-numeric: tabular-nums;
  line-height: 54px;
}
</style>
